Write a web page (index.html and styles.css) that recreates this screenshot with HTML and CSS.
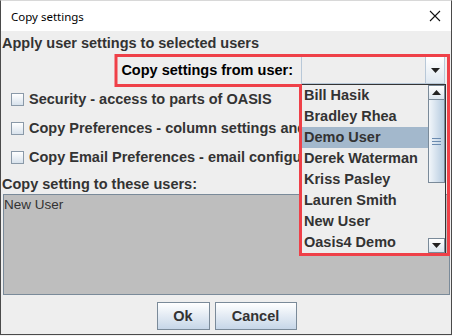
FILE: index.html
```html
<!DOCTYPE html>
<html>
<head>
<meta charset="utf-8">
<link rel="stylesheet" href="styles.css">
</head>
<body>
<div class="window">
  <div class="titlebar">
    <span class="title">Copy settings</span>
    <svg class="close" width="12" height="12" viewBox="0 0 12 12"><path d="M1 1 L11 11 M11 1 L1 11" stroke="#111" stroke-width="1.1" fill="none"/></svg>
  </div>
  <div class="content">
    <div class="heading">Apply user settings to selected users</div>
    <div class="combo-row">
      <span class="combo-label">Copy settings from user:</span>
      <div class="combo">
        <div class="combo-field"></div>
        <div class="combo-btn"><svg width="9" height="5" viewBox="0 0 9 5"><path d="M0 0 H9 L4.5 5 Z" fill="#222"/></svg></div>
      </div>
    </div>
    <div class="check-row"><span class="checkbox"></span><span class="check-text">Security - access to parts of OASIS</span></div>
    <div class="check-row"><span class="checkbox"></span><span class="check-text">Copy Preferences - column settings and filters</span></div>
    <div class="check-row"><span class="checkbox"></span><span class="check-text">Copy Email Preferences - email configuration</span></div>
    <div class="heading2">Copy setting to these users:</div>
    <div class="target-list">
      <div class="target-item">New User</div>
    </div>
    <div class="buttons">
      <button class="btn btn-ok">Ok</button>
      <button class="btn btn-cancel">Cancel</button>
    </div>
  </div>
  <div class="popup">
    <div class="items">
      <div class="item">Bill Hasik</div>
      <div class="item">Bradley Rhea</div>
      <div class="item selected">Demo User</div>
      <div class="item">Derek Waterman</div>
      <div class="item">Kriss Pasley</div>
      <div class="item">Lauren Smith</div>
      <div class="item">New User</div>
      <div class="item">Oasis4 Demo</div>
    </div>
    <div class="scrollbar">
      <div class="sb-btn"><svg width="9" height="5" viewBox="0 0 9 5"><path d="M0 5 H9 L4.5 0 Z" fill="#222"/></svg></div>
      <div class="sb-track">
        <div class="sb-thumb"><span class="grip"></span><span class="grip"></span><span class="grip"></span></div>
      </div>
      <div class="sb-btn"><svg width="9" height="5" viewBox="0 0 9 5"><path d="M0 0 H9 L4.5 5 Z" fill="#222"/></svg></div>
    </div>
  </div>
  <svg class="annotation" width="452" height="336" viewBox="0 0 452 336">
    <path d="M116 55.5 H448.5 V254.5 H300.5 V85.5 H116 Z" fill="none" stroke="#ef4048" stroke-width="3"/>
  </svg>
</div>
</body>
</html>
```

FILE: styles.css
```css
html, body {
  margin: 0;
  padding: 0;
  background: #f0f0f0;
}

.window {
  position: relative;
  width: 452px;
  height: 335px;
  box-sizing: border-box;
  border-left: 1px solid #4a4a4a;
  border-right: 1px solid #4a4a4a;
  border-bottom: 1px solid #4a4a4a;
  border-top: 1px solid #d8d8d8;
  background: #eeeeee;
  overflow: hidden;
  display: flex;
  flex-direction: column;
}

.titlebar {
  height: 30px;
  background: #ffffff;
  display: flex;
  align-items: center;
  justify-content: space-between;
  padding: 0 10px 0 10px;
  flex: none;
}

.title {
  font-family: "Noto Sans", sans-serif;
  font-size: 11.5px;
  color: #000;
}

.close {
  display: block;
}

.content {
  flex: 1;
  padding-left: 1px;
  font-family: "Liberation Sans", Arial, sans-serif;
  font-size: 14.5px;
  color: #333333;
}

.heading {
  font-weight: bold;
  line-height: 20px;
  padding-top: 2px;
  white-space: nowrap;
}

.combo-row {
  margin-top: 3px;
  height: 28px;
  display: flex;
  justify-content: flex-end;
  align-items: center;
  padding-right: 6px;
}

.combo-label {
  font-weight: bold;
  color: #000;
  margin-right: 8px;
  white-space: nowrap;
}

.combo {
  display: flex;
  width: 144px;
  height: 28px;
}

.combo-field {
  flex: 1;
  box-sizing: border-box;
  border: 1px solid #b8c8d8;
  background: #eeeeee;
}

.combo-btn {
  width: 19px;
  box-sizing: border-box;
  border: 1px solid #b8c8d8;
  border-left: none;
  background: linear-gradient(#ffffff, #dfe8f1);
  display: flex;
  align-items: center;
  justify-content: center;
}

.combo-btn svg { display: block; }

.check-row {
  margin-top: 1px;
  width: 299px;
  height: 28px;
  display: flex;
  align-items: center;
  white-space: nowrap;
  overflow: hidden;
}

.checkbox {
  flex: none;
  width: 13px;
  height: 13px;
  box-sizing: border-box;
  border: 1px solid #8a99a8;
  background: linear-gradient(#ffffff, #d8e2ec);
  margin-left: 9px;
  margin-right: 5px;
}

.check-text {
  font-weight: bold;
}

.heading2 {
  margin-top: 4px;
  font-weight: bold;
  line-height: 19px;
  white-space: nowrap;
}

.target-list {
  margin-left: 1px;
  margin-right: 1px;
  height: 101px;
  box-sizing: border-box;
  border: 1px solid #7a8a99;
  background: #bebebe;
  padding: 1px 1px 0 0;
}

.target-item {
  font-size: 13.5px;
  line-height: 18px;
  color: #333;
}

.buttons {
  margin-top: 7px;
  display: flex;
  justify-content: center;
  gap: 5px;
}

.btn {
  height: 28px;
  box-sizing: border-box;
  border: 1px solid #7a8a99;
  background: linear-gradient(#ffffff, #c6d6e8);
  font-family: "Liberation Sans", Arial, sans-serif;
  font-weight: bold;
  font-size: 14.5px;
  color: #333;
  padding: 0;
  margin: 0;
}

.btn-ok { width: 53px; }
.btn-cancel { width: 82px; }

.popup {
  position: absolute;
  left: 300px;
  top: 83px;
  width: 145px;
  height: 170px;
  box-sizing: border-box;
  border: 1px solid #333;
  background: #eeeeee;
  display: flex;
  font-family: "Liberation Sans", Arial, sans-serif;
  font-size: 14.5px;
  font-weight: bold;
  color: #333;
}

.items {
  flex: 1;
  overflow: hidden;
}

.item {
  height: 21px;
  line-height: 21px;
  padding-left: 2px;
  white-space: nowrap;
}

.item.selected {
  background: #a3b8cc;
}

.scrollbar {
  width: 17px;
  flex: none;
  display: flex;
  flex-direction: column;
}

.sb-btn {
  height: 15px;
  box-sizing: border-box;
  border: 1px solid #7a8a99;
  background: linear-gradient(#ffffff, #dbe5ef);
  display: flex;
  align-items: center;
  justify-content: center;
}

.sb-btn svg { display: block; }

.sb-track {
  flex: 1;
  background: #eeeeee;
}

.sb-thumb {
  height: 83px;
  box-sizing: border-box;
  border: 1px solid #7a8a99;
  border-top: none;
  background: linear-gradient(90deg, #f2f6fa, #c8d8e8 70%, #b8cce0);
  display: flex;
  flex-direction: column;
  align-items: center;
  justify-content: center;
  gap: 2px;
}

.grip {
  width: 9px;
  height: 1px;
  background: #6b8bb0;
}

.annotation {
  position: absolute;
  left: -1px;
  top: -1px;
  pointer-events: none;
}
```
